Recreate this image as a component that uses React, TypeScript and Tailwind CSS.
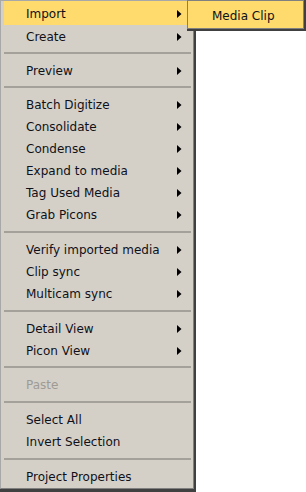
type Entry = { label: string; sub?: boolean; disabled?: boolean; active?: boolean } | { sep: number };

const MENU: Entry[] = [
  { label: "Import", sub: true, active: true },
  { label: "Create", sub: true },
  { sep: 12 },
  { label: "Preview", sub: true },
  { sep: 12 },
  { label: "Batch Digitize", sub: true },
  { label: "Consolidate", sub: true },
  { label: "Condense", sub: true },
  { label: "Expand to media", sub: true },
  { label: "Tag Used Media", sub: true },
  { label: "Grab Picons", sub: true },
  { sep: 13 },
  { label: "Verify imported media", sub: true },
  { label: "Clip sync", sub: true },
  { label: "Multicam sync", sub: true },
  { sep: 13 },
  { label: "Detail View", sub: true },
  { label: "Picon View", sub: true },
  { sep: 12 },
  { label: "Paste", disabled: true },
  { sep: 13 },
  { label: "Select All" },
  { label: "Invert Selection" },
  { sep: 13 },
  { label: "Project Properties" },
];

function Arrow() {
  return (
    <svg width="5" height="8" viewBox="0 0 5 8" className="shrink-0">
      <path d="M0 0 L4.5 4 L0 8 Z" fill="#000" />
    </svg>
  );
}

export default function App() {
  return (
    <div className="relative w-[306px] h-[492px] bg-white overflow-hidden font-['DejaVu_Sans',sans-serif] text-[12px] text-[#101018]">
      {/* main menu + shadow */}
      <div className="w-[196px] h-[492px] bg-[#404040] pr-[2px] pb-[3px]">
        <div className="h-full border-l border-t border-[#a8a8a8] border-r border-b border-r-[#808080] border-b-[#808080] bg-[#d4d0c8] pl-[3px] pr-[2px]">
          {MENU.map((m, i) =>
            "sep" in m ? (
              <div key={i} className={`flex items-center ${m.sep === 13 ? "h-[13px]" : "h-[12px]"}`}>
                <div className="w-full h-[2px] bg-[#a4a09a]" />
              </div>
            ) : (
              <div
                key={i}
                className={`flex items-center pt-[2px] pl-[22px] pr-[9px] ${m.active ? "h-[24px] bg-[#fedb6c]" : "h-[22px]"} ${
                  m.disabled ? "text-[#9e9b96]" : ""
                }`}
              >
                <span className="flex-1 whitespace-nowrap">{m.label}</span>
                {m.sub && <Arrow />}
              </div>
            )
          )}
        </div>
      </div>

      {/* submenu */}
      <div className="absolute left-[187px] top-0 w-[119px] h-[31px] bg-[#404040] pr-[2px] pb-[2px]">
        <div className="h-full border border-[#808080] bg-[#fedb6c] flex items-center pt-[2px] pl-[24px]">
          <span className="whitespace-nowrap">Media Clip</span>
        </div>
      </div>
    </div>
  );
}
